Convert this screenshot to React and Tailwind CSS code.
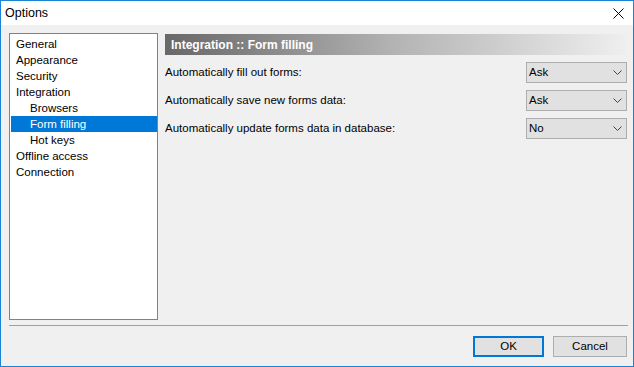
import React from 'react'

const items = [
  { label: 'General', level: 0 },
  { label: 'Appearance', level: 0 },
  { label: 'Security', level: 0 },
  { label: 'Integration', level: 0 },
  { label: 'Browsers', level: 1 },
  { label: 'Form filling', level: 1, selected: true },
  { label: 'Hot keys', level: 1 },
  { label: 'Offline access', level: 0 },
  { label: 'Connection', level: 0 },
]

const rows = [
  { label: 'Automatically fill out forms:', value: 'Ask' },
  { label: 'Automatically save new forms data:', value: 'Ask' },
  { label: 'Automatically update forms data in database:', value: 'No' },
]

function Chevron() {
  return (
    <svg width="9" height="5" viewBox="0 0 9 5" className="text-[#444]">
      <path d="M0.5 0.5 L4.5 4.5 L8.5 0.5" fill="none" stroke="currentColor" strokeWidth="1" />
    </svg>
  )
}

function Select({ value }) {
  return (
    <div className="w-[101px] h-[21px] bg-[#e1e1e1] border border-[#adadad] flex items-center justify-between pl-[2px] pr-[4px]">
      <span>{value}</span>
      <Chevron />
    </div>
  )
}

export default function App() {
  return (
    <div
      className="w-[634px] h-[367px] border border-[#1883d7] flex flex-col text-[11.5px] text-black overflow-hidden"
      style={{ fontFamily: '"Liberation Sans", Arial, sans-serif' }}
    >
      <div className="h-[24px] bg-white flex items-center justify-between pl-[4px] pr-[9px] shrink-0">
        <span className="text-[12.5px]">Options</span>
        <svg width="11" height="11" viewBox="0 0 11 11">
          <path d="M0.5 0.5 L10.5 10.5 M10.5 0.5 L0.5 10.5" stroke="#000" strokeWidth="1" />
        </svg>
      </div>

      <div className="flex-1 bg-[#f0f0f0] flex flex-col pt-[8px] pl-[8px] pr-[6px] pb-[9px]">
        <div className="flex h-[287px]">
          <div className="w-[149px] h-full bg-white border border-[#828282] pt-[2px] pl-[1px] shrink-0">
            {items.map((it) => (
              <div
                key={it.label}
                className={`h-[16px] leading-[16px] ${it.level ? 'pl-[19px]' : 'pl-[5px]'} ${it.selected ? 'bg-[#0078d7] text-white' : ''}`}
              >
                {it.label}
              </div>
            ))}
          </div>

          <div className="ml-[7px] flex-1 pt-[1px]">
            <div className="h-[21px] bg-gradient-to-r from-[#686868] via-[#b4b4b4] to-[#efefef] flex items-center pl-[6px] text-white font-bold text-[12px]">
              Integration :: Form filling
            </div>
            <div className="flex flex-col gap-[7px] mt-[7px]">
              {rows.map((r) => (
                <div key={r.label} className="flex items-center justify-between">
                  <span>{r.label}</span>
                  <Select value={r.value} />
                </div>
              ))}
            </div>
          </div>
        </div>

        <div className="mt-[5px] h-px bg-[#a0a0a0] mr-[-1px]" />

        <div className="mt-[10px] flex justify-end gap-[9px]">
          <button className="w-[71px] h-[21px] bg-[#e1e1e1] border-2 border-[#0078d7]">OK</button>
          <button className="w-[74px] h-[21px] bg-[#e1e1e1] border border-[#adadad]">Cancel</button>
        </div>
      </div>
    </div>
  )
}
